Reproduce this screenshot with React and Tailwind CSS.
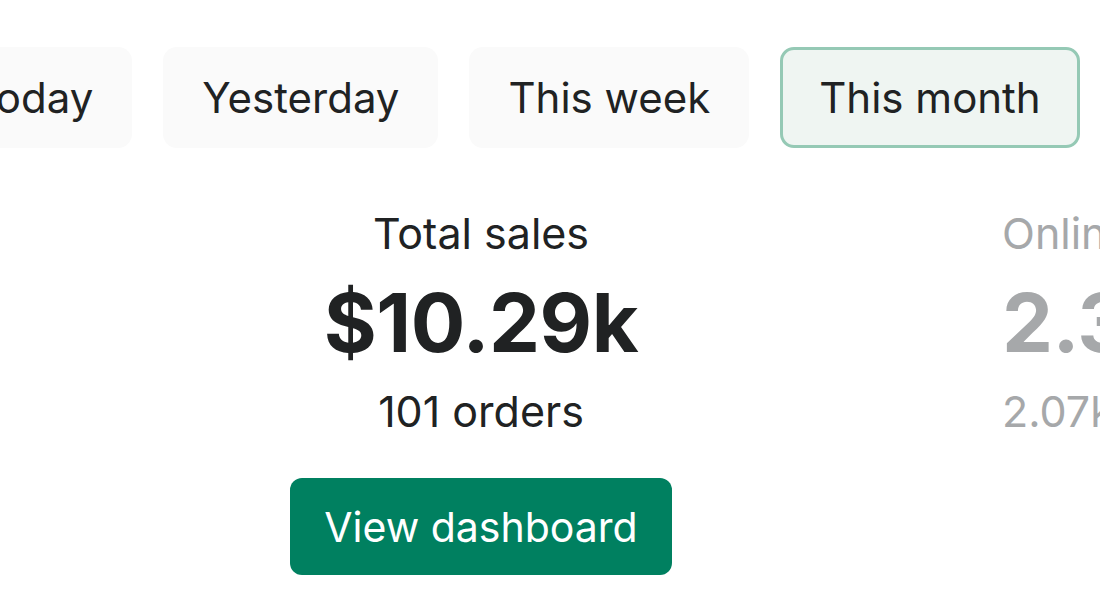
import React, { useState } from 'react';

const tabs = ['Today', 'Yesterday', 'This week', 'This month'];

function Stat({ title, value, sub, action, muted, align = 'center' }) {
  return (
    <div
      className={
        'flex flex-col shrink-0 whitespace-nowrap ' +
        (align === 'center' ? 'items-center w-[582px]' : 'items-start w-[400px]') +
        (muted ? ' text-[#a6a8aa]' : ' text-[#202223]')
      }
    >
      <div className="text-[43px] leading-[50px]">{title}</div>
      <div className="mt-[16px] text-[81px] leading-[98px] font-bold tracking-[-0.5px]">{value}</div>
      <div className="mt-[14px] text-[43px] leading-[50px]">{sub}</div>
      {action && (
        <button className="mt-[42px] w-[382px] h-[97px] rounded-[12px] bg-[#008060] text-white text-[41px] leading-[50px]">
          {action}
        </button>
      )}
    </div>
  );
}

export default function App() {
  const [active, setActive] = useState('This month');

  return (
    <div
      className="w-[1100px] h-[612px] overflow-hidden bg-white"
      style={{ fontFamily: 'Inter, "Noto Sans", sans-serif' }}
    >
      <div className="flex gap-[31px] pt-[47px] ml-[-67px]">
        {tabs.map(t => (
          <button
            key={t}
            onClick={() => setActive(t)}
            className={
              'shrink-0 h-[101px] rounded-[14px] text-[42px] leading-[50px] text-[#202223] whitespace-nowrap ' +
              (active === t
                ? 'bg-[#eff5f2] border-[3px] border-[#95c9b5] px-[36px]'
                : 'bg-[#fafafa] px-[39px]')
            }
          >
            {t}
          </button>
        ))}
      </div>

      <div className="flex gap-[230px] pl-[190px] pt-[60px]">
        <Stat title="Total sales" value="$10.29k" sub="101 orders" action="View dashboard" />
        <Stat title="Online store sessions" value="2.3k" sub="2.07k visitors" muted align="start" />
      </div>
    </div>
  );
}
